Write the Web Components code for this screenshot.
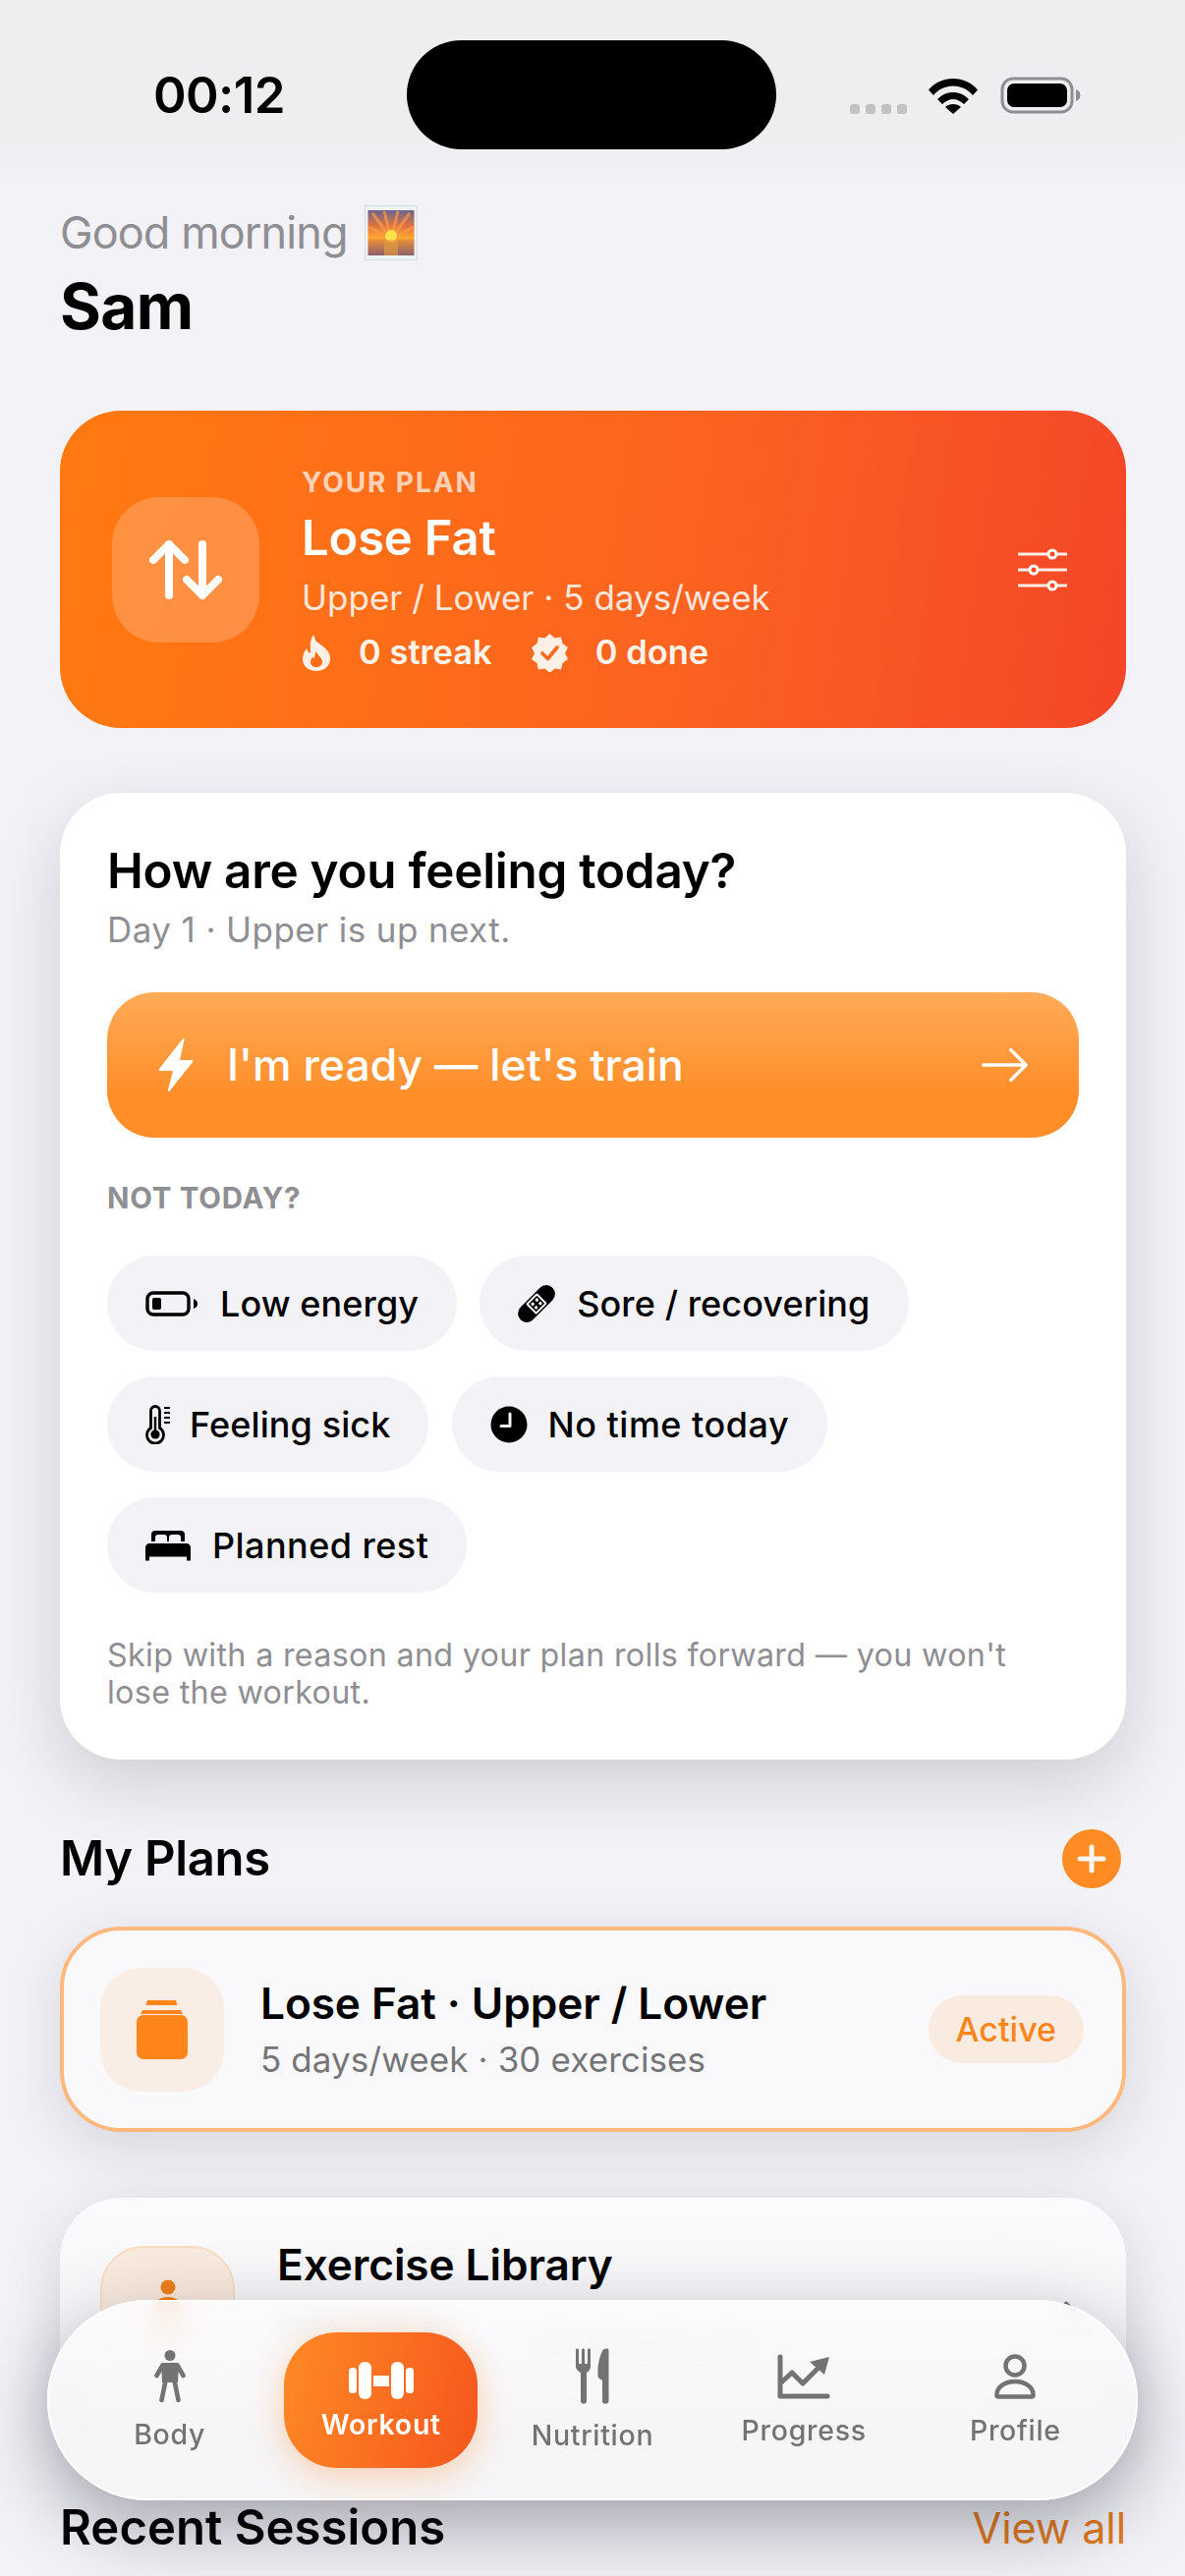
<!DOCTYPE html>
<html lang="en"><head><meta charset="utf-8"><title>Home</title>
<style>
html,body{margin:0;padding:0;background:#f2f2f7;}
body{width:1206px;height:2622px;overflow:hidden;position:relative;font-family:Inter,"Noto Sans",sans-serif;color:#000;-webkit-font-smoothing:antialiased;}
</style></head><body>
<script>
function def(name,css,html){
  customElements.define(name,class extends HTMLElement{
    connectedCallback(){if(this.shadowRoot)return;const s=this.attachShadow({mode:'open'});s.innerHTML='<style>'+css+'</style>'+(typeof html==='function'?html(this):html);}
  });
}
const ICONS={
 bolt:'<svg width="36" height="56" viewBox="0 0 36 56"><path d="M25 1.500c.6-1 1.800-.5 1.500.7L22 23h12c1.400 0 1.900 1 1 2.200L11.500 54.500c-.8 1-2 .5-1.700-.8L15 34H2c-1.500 0-2-1-1-2.300z" fill="#fff"/></svg>',
 arrow:'<svg width="48" height="36" viewBox="0 0 50 36" fill="none" stroke="#fff" stroke-width="3.600" stroke-linecap="round" stroke-linejoin="round"><path d="M2 18h45M31 2l16 16-16 16"/></svg>',
 battery:'<svg width="54" height="26" viewBox="0 0 54 26"><rect x="2" y="2" width="42" height="22" rx="6" fill="none" stroke="#000" stroke-width="3.400"/><rect x="7" y="7" width="9" height="12" rx="2" fill="#000"/><path d="M49 8c3 1 4 3 4 5s-1 4-4 5z" fill="#000"/></svg>',
 bandage:'<svg width="38" height="38" viewBox="0 0 38 38"><g transform="rotate(-45 19 19)"><rect x="-4" y="10" width="46" height="18" rx="9" fill="#000"/><rect x="11" y="11.500" width="16" height="15" rx="1.500" fill="#f2f2f7"/><rect x="13" y="13.500" width="12" height="11" fill="#000"/><circle cx="16" cy="16.500" r="1.700" fill="#f2f2f7"/><circle cx="22" cy="16.500" r="1.700" fill="#f2f2f7"/><circle cx="16" cy="21.500" r="1.700" fill="#f2f2f7"/><circle cx="22" cy="21.500" r="1.700" fill="#f2f2f7"/></g></svg>',
 thermo:'<svg width="26" height="40" viewBox="0 0 26 40" style="margin-right:-3px"><path d="M5.500 6a4.500 4.500 0 0 1 9 0v17.500a8.500 8.500 0 1 1-9 0z" fill="none" stroke="#000" stroke-width="2.800"/><circle cx="10" cy="30" r="4.600" fill="#000"/><rect x="8.800" y="12" width="2.400" height="16" fill="#000"/><path d="M19 3h6M19 8h6M19 13h6M19 18h6" stroke="#000" stroke-width="2" fill="none"/></svg>',
 clock:'<svg width="38" height="38" viewBox="0 0 38 38" style="margin-right:-2px"><circle cx="19" cy="19" r="18.500" fill="#000"/><path d="M20 8v12.500h-9" fill="none" stroke="#f2f2f7" stroke-width="3" stroke-linecap="round" stroke-linejoin="round"/></svg>',
 bed:'<svg width="46" height="32" viewBox="0 0 46 32"><path d="M6 12V5a4 4 0 0 1 4-4h26a4 4 0 0 1 4 4v7h-4V8c0-2-1-3-3-3h-6c-2 0-3 1-3 3v4h-2V8c0-2-1-3-3-3h-6c-2 0-3 1-3 3v4z" fill="#000"/><path d="M4 14h38c2 0 4 2 4 4v9.500H0V18c0-2 2-4 4-4zM0 27h4v4.500H0zM42 27h4v4.500h-4z" fill="#000"/></svg>'
};
def('status-bar',`
:host{display:block;position:absolute;left:0;top:0;width:1206px;height:190px;background:linear-gradient(#eeeef0 0,#eeeef0 130px,#f2f2f7 190px);z-index:5}
.island{position:absolute;left:414px;top:41px;width:376px;height:111px;border-radius:56px;background:#000}
.time{position:absolute;left:156px;top:67px;font:600 51px/60px Inter,sans-serif;letter-spacing:-.6px;color:#000}
svg{position:absolute}
`,`<div class="time"><slot></slot></div><div class="island"></div>
<svg style="left:864px;top:105px" width="60" height="12" viewBox="0 0 60 12" fill="#c2c2c4"><rect x="1" y="1" width="10" height="10" rx="3"/><rect x="17" y="1" width="10" height="10" rx="3"/><rect x="33" y="1" width="10" height="10" rx="3"/><rect x="49" y="1" width="10" height="10" rx="3"/></svg>
<svg style="left:944px;top:78px" width="52" height="38" viewBox="0 0 52 38"><path d="M1 13.500C7.500 6 16 2 26 2s18.500 4 25 11.500L46 19C41 13 34 9.500 26 9.500S11 13 6 19z"/><path d="M10 23c4.500-4.500 10-7 16-7s11.500 2.500 16 7l-5 5c-3-3-7-5-11-5s-8 2-11 5z"/><path d="M18 31c2-2 5-3 8-3s6 1 8 3l-8 7z"/></svg>
<svg style="left:1018px;top:78px" width="82" height="38" viewBox="0 0 82 38"><rect x="2" y="2" width="71" height="34" rx="11" fill="none" stroke="#8e8e93" stroke-width="3"/><rect x="7" y="7" width="61" height="24" rx="7" fill="#000"/><path d="M77 13c3 1 4.500 3.500 4.500 6s-1.500 5-4.500 6z" fill="#8e8e93"/></svg>`);
def('greeting-head',`
:host{display:block;padding:205px 61px 0}
.g{display:flex;align-items:center;gap:17px;height:64px;font:400 45px/64px Inter,sans-serif;color:#8e8e93;letter-spacing:-.9px}
.n{font:700 64px/76px Inter,sans-serif;color:#000;letter-spacing:-.7px;margin-top:5px}
`,`<div class="g"><slot name="hello"></slot>
<svg width="54" height="56" viewBox="0 0 54 56"><defs><linearGradient id="s" x1="0" y1="0" x2="0" y2="1"><stop offset="0" stop-color="#6a6490"/><stop offset=".35" stop-color="#e0743e"/><stop offset=".62" stop-color="#ffa630"/><stop offset=".68" stop-color="#e28a3a"/><stop offset="1" stop-color="#8c5f6d"/></linearGradient></defs><rect x=".5" y=".5" width="53" height="55" fill="#eef2f2" stroke="#d2dcdc"/><rect x="3.500" y="5" width="47" height="46" fill="url(#s)"/><path d="M27 34L8 8M27 34L20 6M27 34L34 6M27 34L46 8M27 34L4 22M27 34L50 22" stroke="#ff9b4a" stroke-width="3" opacity=".7"/><circle cx="27" cy="31" r="6" fill="#ffe34d"/><rect x="20" y="35" width="14" height="16" fill="#e8a040" opacity=".6"/></svg></div>
<div class="n"><slot name="name"></slot></div>`);
def('plan-hero',`
:host{display:flex;align-items:center;box-sizing:border-box;margin:68px 60px 0 61px;height:323px;padding:0 59px 0 53px;border-radius:62px;color:#fff;background:linear-gradient(98deg,#ff7a10 0,#fb6220 60%,#f44528 100%)}
.tile{width:150px;height:148px;border-radius:48px;background:rgba(255,255,255,.2);display:flex;align-items:center;justify-content:center;flex:none;margin-right:43px}
.tx{flex:1;display:flex;flex-direction:column;}
.l{font:700 28px/34px Inter,sans-serif;letter-spacing:1.9px;color:rgba(255,255,255,.7);margin-top:1px}
.t{font:600 49px/60px Inter,sans-serif;margin-top:10px;letter-spacing:-.2px}
.s{font:400 35px/44px Inter,sans-serif;color:rgba(255,255,255,.86);margin-top:8px;letter-spacing:0}
.st{display:flex;align-items:center;margin-top:12px;font:600 34.500px/44px Inter,sans-serif;color:#fff4ec}
.st svg{margin-right:28px}
.st span{margin-right:40px}
`,`<div class="tile"><svg width="74" height="62" viewBox="0 0 74 62" fill="none" stroke="#fff" stroke-width="8" stroke-linecap="round" stroke-linejoin="round"><path d="M20 57V5M4 21L20 5l16 16M54 5v52M38 41l16 16 16-16"/></svg></div>
<div class="tx"><div class="l"><slot name="label"></slot></div><div class="t"><slot name="title"></slot></div><div class="s"><slot name="sub"></slot></div>
<div class="st"><svg width="30" height="37" viewBox="0 0 30 37"><path d="M12 0c2 4 1 6 6 9 7 5 12 10 11 17-1 7-7 11-14 11S1 33 1 25c0-5 2-8 4-11 1 3 2 4 4 5C9 12 8 6 12 0z" fill="#fff0e6"/><path d="M15 17c1 4 6 6 6 11 0 3-3 5-6 5s-6-2-6-5c0-2 1-4 2-5 1 1 2 1 2 1 0-3 1-5 2-7z" fill="#ff6c18"/></svg><span><slot name="streak"></slot></span>
<svg width="37" height="39" viewBox="0 0 37 39"><path d="M18.500 0l5 4.500 6.500-1 1.500 6.500 5.500 4-3 6 3 6-5.500 4-1.500 6.500-6.500-1-5 4.500-5-4.500-6.500 1-1.500-6.500-5.500-4 3-6-3-6 5.500-4L7 3.500l6.500 1z" fill="#fff0e6"/><path d="M11 20l5.500 5.500L26 14" fill="none" stroke="#fb6a1c" stroke-width="3.600" stroke-linecap="round" stroke-linejoin="round"/></svg><span><slot name="done"></slot></span></div></div>
<svg width="52" height="44" viewBox="0 0 52 44" fill="none" stroke="#fff" stroke-width="3"><path d="M1 6h31M40 6h11M1 22h12M21 22h30M1 38h31M40 38h11" stroke-opacity=".9"/><circle cx="36" cy="6" r="4"/><circle cx="17" cy="22" r="4"/><circle cx="36" cy="38" r="4"/></svg>`);
def('feel-card',`
:host{display:block;box-sizing:border-box;margin:66px 60px 0 61px;height:984px;padding:49px 48px 0;background:#fff;border-radius:62px;box-shadow:0 24px 70px rgba(20,20,40,.16)}
h2{margin:0;font:600 49.400px/60px Inter,sans-serif;letter-spacing:-.25px}
.s{font:400 35px/44px Inter,sans-serif;color:#8e8e93;margin-top:8px;letter-spacing:.4px}
.go{display:flex;align-items:center;height:148px;margin-top:42px;padding:0 51px 0 52px;box-sizing:border-box;border-radius:48px;background:linear-gradient(#ffab57,#ff8e29 70%);color:#fff;font:500 44.500px/60px Inter,sans-serif}
.go .x{flex:1;margin-left:34px}
.n{font:700 29.500px/36px Inter,sans-serif;color:#8e8e93;letter-spacing:.7px;margin-top:43px}
.chips{display:flex;flex-wrap:wrap;gap:26px 24px;margin-top:41px}
.f{font:400 32.300px/38px Inter,sans-serif;color:#8e8e93;margin-top:45px;letter-spacing:.3px}
`,`<h2><slot name="title"></slot></h2><div class="s"><slot name="sub"></slot></div>
<div class="go">${ICONS.bolt}<span class="x"><slot name="cta"></slot></span>${ICONS.arrow}</div>
<div class="n"><slot name="not"></slot></div><div class="chips"><slot name="chip"></slot></div><div class="f"><slot name="foot"></slot></div>`);
def('reason-chip',`
:host{display:inline-flex;align-items:center;gap:22px;height:97px;padding:0 39px;border-radius:49px;background:#f2f2f7;font:500 36px/46px Inter,sans-serif;color:#000;letter-spacing:.1px}
svg{display:block}
`,h=>ICONS[h.getAttribute('icon')]+'<slot></slot>');
def('section-head',`
:host{display:flex;align-items:center;justify-content:space-between;margin:0 60px 0 61px;font:600 49px/64px Inter,sans-serif;letter-spacing:-.3px}
`,`<slot></slot><slot name="end"></slot>`);
def('add-button',`
:host{display:flex;align-items:center;justify-content:center;width:60px;height:60px;border-radius:50%;background:#ff8b24;margin-right:5px}
`,`<svg width="30" height="30" viewBox="0 0 30 30" stroke="#f8f4f0" stroke-width="5" stroke-linecap="round"><path d="M15 3v24M3 15h24"/></svg>`);
def('plan-row',`
:host{display:flex;align-items:center;box-sizing:border-box;margin:37px 60px 0 61px;height:209px;padding:0 39px 0 37px;border:4px solid #ffb97e;border-radius:62px;background:#f9f9fb;box-shadow:0 16px 60px rgba(20,20,40,.13)}
.tile{width:126px;height:126px;border-radius:42px;background:#faede5;display:flex;align-items:center;justify-content:center;flex:none;margin-right:37px}
.tx{flex:1;margin-top:-2px}
.t{font:600 44.200px/58px Inter,sans-serif;letter-spacing:-.1px}
.s{font:400 35px/46px Inter,sans-serif;color:#757578;margin-top:5px;letter-spacing:.1px}
.a{padding:0 28px;height:69px;display:flex;align-items:center;border-radius:35px;background:#faebe0;color:#ff8419;font:500 34px/46px Inter,sans-serif}
`,`<div class="tile"><svg width="54" height="60" viewBox="0 0 54 60" fill="#ff8419"><path d="M12 0h29l1.500 5h-32zM7 10h39l2 4H5z"/><rect x="1" y="15" width="52" height="45" rx="7"/></svg></div>
<div class="tx"><div class="t"><slot name="title"></slot></div><div class="s"><slot name="sub"></slot></div></div><div class="a"><slot name="badge"></slot></div>`);
def('library-card',`
:host{display:flex;align-items:flex-start;box-sizing:border-box;margin:67px 60px 0 61px;height:238px;padding:49px 42px 0 41px;border-radius:62px;background:linear-gradient(#fbfbfd,#f0f0f3);box-shadow:0 16px 60px rgba(20,20,40,.14)}
.tile{width:137px;height:137px;border-radius:44px;background:#f9eade;border:2px solid #f7dcc3;box-sizing:border-box;display:flex;justify-content:center;padding-top:32px;flex:none;margin-right:43px}
.tx{flex:1;margin-top:-5px}
.t{font:600 44.200px/48px Inter,sans-serif;letter-spacing:-.1px}
.bar{width:180px;height:18px;border-radius:9px;background:#8a8a8e;margin-top:31px;opacity:.8}
.dots{display:flex;gap:8px;margin:0 0 0 260px;position:relative;top:-4px}
.dots i{width:50px;height:26px;border-radius:13px;background:#c9c9cc}
svg.c{margin-top:56px}
`,`<div class="tile"><svg width="40" height="80" viewBox="0 0 40 80" fill="#f08018"><circle cx="20" cy="8" r="7.500"/><path d="M6 30c0-8 6-12 14-12s14 4 14 12v14h-7v32h-5V50h-4v26h-5V44H6z"/></svg></div>
<div class="tx"><div class="t"><slot></slot></div><div class="bar"></div><div class="dots"><i></i><i></i><i></i><i></i></div></div>
<svg class="c" width="22" height="36" viewBox="0 0 22 36" fill="none" stroke="#6a6a6e" stroke-width="4.500" stroke-linecap="round" stroke-linejoin="round"><path d="M3 3l15 15L3 33"/></svg>`);
def('view-all',`:host{font:400 43.200px/64px Inter,sans-serif;color:#e07a20;letter-spacing:-.1px}`,`<slot></slot>`);
const TABI={
 body:'<svg width="32" height="54" viewBox="0 0 32 54"><circle cx="16" cy="5.500" r="5.500" fill="#737373"/><path d="M10 13h12c1.500 0 2.500.7 3 2l-1 18H8L7 15c.5-1.300 1.500-2 3-2z" fill="#737373"/><path d="M8.500 15.500L2.500 26M23.500 15.500l6 10.500M11.500 31L7.500 51M20.500 31l4 20" fill="none" stroke="#737373" stroke-width="4.600" stroke-linecap="round"/></svg>',
 dumb:'<svg width="66" height="38" viewBox="0 0 66 38" fill="#fff"><rect x="0" y="6" width="8" height="26" rx="3.500"/><rect x="10" y="0" width="13" height="38" rx="6"/><rect x="25" y="14" width="16" height="11" /><rect x="43" y="0" width="13" height="38" rx="6"/><rect x="58" y="6" width="8" height="26" rx="3.500"/></svg>',
 food:'<svg width="34" height="57" viewBox="0 0 34 57" fill="#737373"><path d="M0 2c0-2 3-2 3 0v14h3V2c0-2 3-2 3 0v14h3V2c0-2 3-2 3 0v17c0 2.500-2 5-4 6v29c0 3.500-6 3.500-6 0V25c-2-1-5-3.500-5-6zM27 3c0-2 6-4 6.500-1v52c0 3.500-6.500 3.500-6.500 0V33l-3-2c-1-.7-1.500-1.500-1.500-3C22 18 24 9 27 3z"/></svg>',
 prog:'<svg width="54" height="46" viewBox="0 0 54 46" fill="none" stroke="#737373" stroke-width="5" stroke-linecap="round" stroke-linejoin="round"><path d="M3 3v40h48M3 30l12-11 11 11 15-15"/><path d="M33 8L53 3l-5 18z" fill="#737373" stroke="none"/></svg>',
 user:'<svg width="42" height="46" viewBox="0 0 42 46" fill="none" stroke="#737373" stroke-width="4.500" stroke-linejoin="round"><circle cx="21" cy="12" r="9.500"/><path d="M2.500 42c-.5-8 8-14 18.500-14s19 6 18.500 14c0 1-1 1.500-2 1.500h-33c-1 0-2-.5-2-1.500z"/></svg>'
};
def('tab-bar',`
:host{position:absolute;left:48px;top:2341px;width:1110px;height:204px;box-sizing:border-box;padding:0 17px;display:grid;grid-template-columns:repeat(5,1fr);align-items:center;border-radius:102px;background:linear-gradient(rgba(252,252,254,.88),rgba(245,245,247,.97) 70%);backdrop-filter:blur(14px);-webkit-backdrop-filter:blur(14px);box-shadow:0 26px 76px rgba(20,20,40,.36),inset 0 0 0 2px rgba(255,255,255,.75);z-index:6}
`,`<slot></slot>`);
def('tab-item',`
:host{display:flex;flex-direction:column;align-items:center;justify-content:center;gap:18px;font:500 28.500px/28px Inter,sans-serif;color:#737373;letter-spacing:.7px;margin-top:-3px}
:host([active]){color:#fff;font-weight:600;width:197px;height:138px;justify-self:center;border-radius:54px;background:linear-gradient(105deg,#ff8a25,#f5561d);box-shadow:0 8px 36px rgba(255,130,40,.35);gap:12px;margin-top:-1px}
svg{display:block}
`,h=>TABI[h.getAttribute('icon')]+'<span><slot></slot></span>');
</script>
<status-bar>00:12</status-bar>
<greeting-head><span slot="hello">Good morning</span><span slot="name">Sam</span></greeting-head>
<plan-hero><span slot="label">YOUR PLAN</span><span slot="title">Lose Fat</span><span slot="sub">Upper / Lower · 5 days/week</span><span slot="streak">0 streak</span><span slot="done">0 done</span></plan-hero>
<feel-card>
<span slot="title">How are you feeling today?</span><span slot="sub">Day 1 · Upper is up next.</span><span slot="cta">I'm ready — let's train</span><span slot="not">NOT TODAY?</span>
<reason-chip slot="chip" icon="battery">Low energy</reason-chip><reason-chip slot="chip" icon="bandage" style="margin-left:-1px">Sore / recovering</reason-chip><reason-chip slot="chip" icon="thermo">Feeling sick</reason-chip><reason-chip slot="chip" icon="clock" style="letter-spacing:.5px">No time today</reason-chip><reason-chip slot="chip" icon="bed" style="letter-spacing:.45px">Planned rest</reason-chip>
<span slot="foot">Skip with a reason and your plan rolls forward — you won't<br>lose the workout.</span>
</feel-card>
<section-head style="margin-top:69px">My Plans<add-button slot="end"></add-button></section-head>
<plan-row><span slot="title">Lose Fat · Upper / Lower</span><span slot="sub">5 days/week · 30 exercises</span><span slot="badge">Active</span></plan-row>
<library-card>Exercise Library</library-card>
<section-head style="margin-top:66px;letter-spacing:.03px">Recent Sessions<view-all slot="end">View all</view-all></section-head>
<tab-bar>
<tab-item icon="body">Body</tab-item>
<tab-item icon="dumb" active>Workout</tab-item>
<tab-item icon="food">Nutrition</tab-item>
<tab-item icon="prog">Progress</tab-item>
<tab-item icon="user">Profile</tab-item>
</tab-bar>
</body></html>
